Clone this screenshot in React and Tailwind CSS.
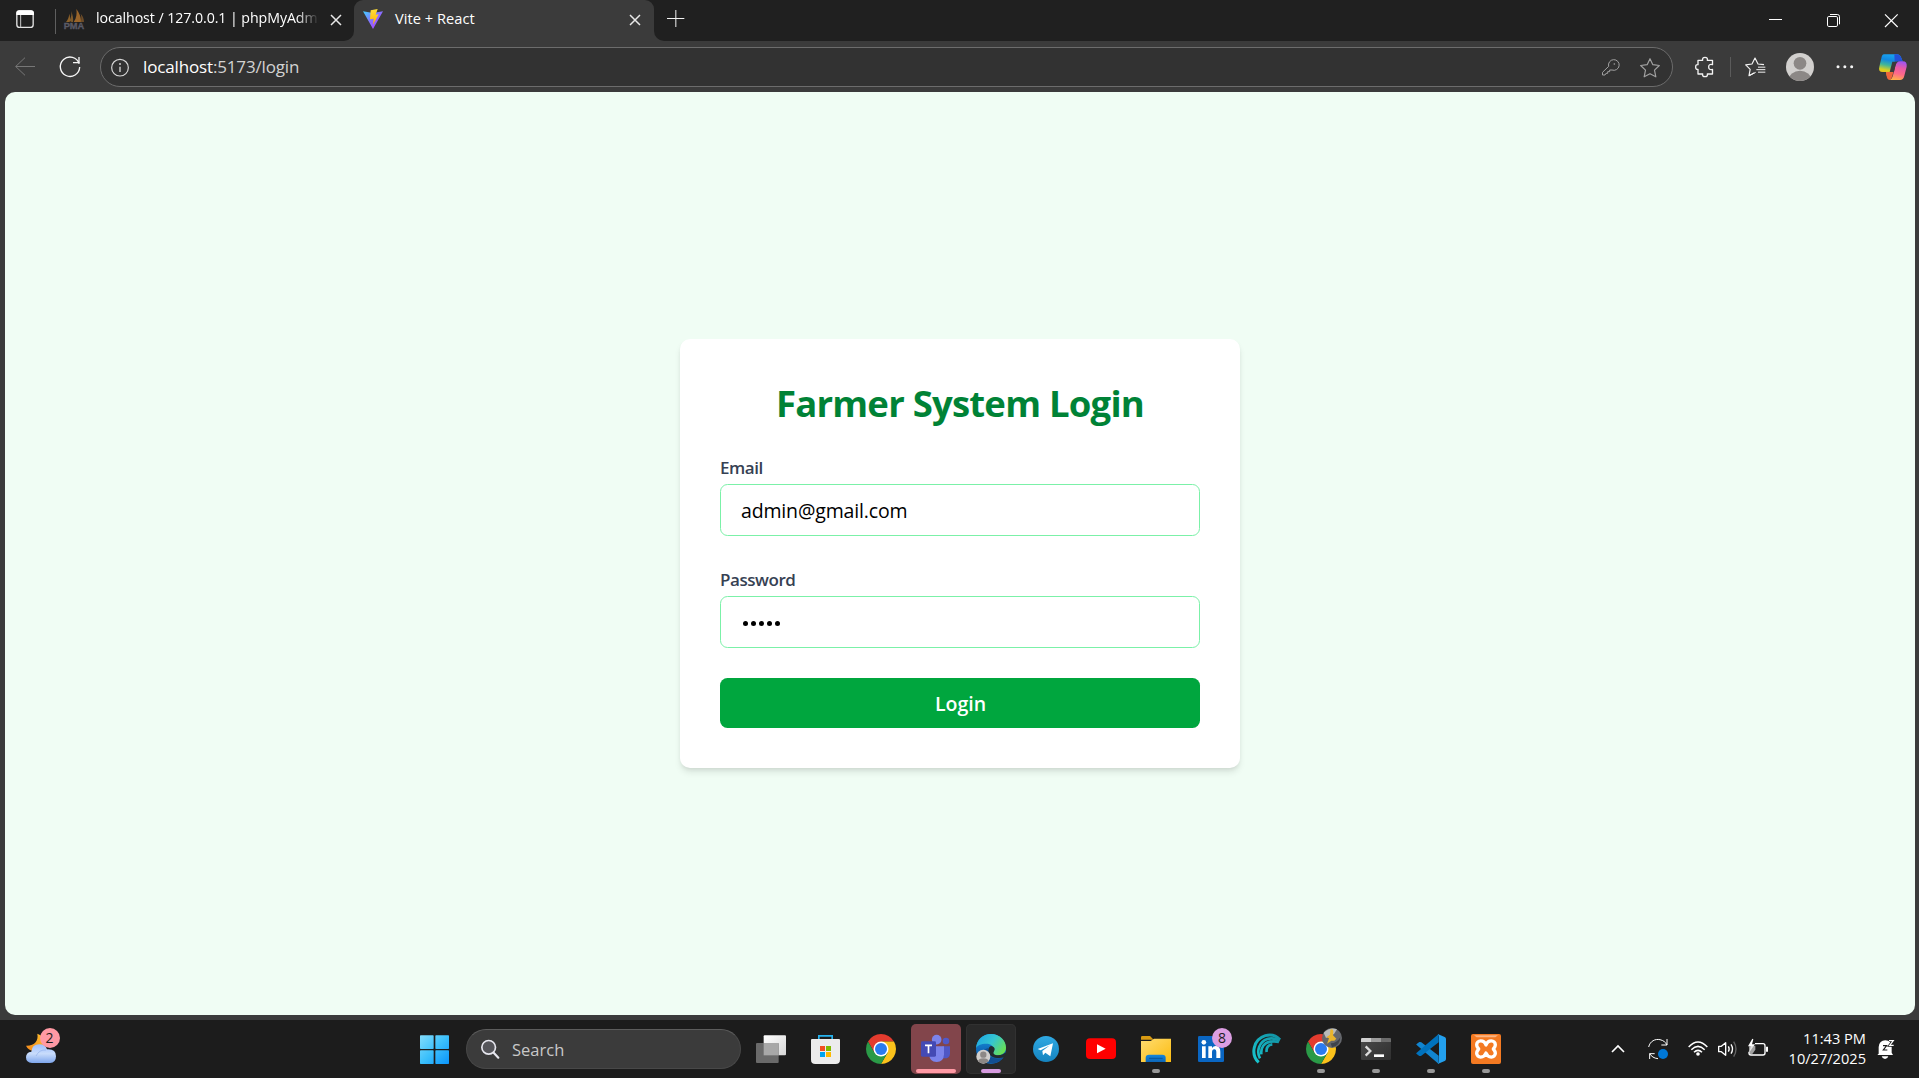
import React from "react";

/* Glyph drawn in a slot of the given size; drawings use three units per pixel. */
function Glyph({ x, y, w, h, children, className = "" }) {
  return (
    <svg width={w} height={h} viewBox={`${x} ${y} ${w * 3} ${h * 3}`} fill="none" className={`shrink-0 ${className}`}>
      {children}
    </svg>
  );
}

function TabClose() {
  return (
    <svg width="12" height="12" viewBox="0 0 12 12" fill="none" className="shrink-0">
      <path d="M1 1L11 11M11 1L1 11" stroke="#e8e8e8" strokeWidth="1.5" />
    </svg>
  );
}

function TitleBar() {
  return (
    <header className="flex h-[42px] shrink-0 bg-[#3b3b3b] text-white">
      <div className="flex h-[41px] w-[354px] items-center rounded-br-[10px] bg-[#202020]">
        <Glyph x={0} y={0} w={55} h={41}>
          <rect x="50.500" y="33" width="49" height="49" rx="8" stroke="#e4e4e4" strokeWidth="4" />
          <path d="M49 45V40Q49 31 58 31H93Q102 31 102 40V45Z" fill="#fff" />
          <path d="M62 45V82" stroke="#c9c9c9" strokeWidth="3" />
        </Glyph>
        <div className="mt-px h-[25px] w-px bg-[#5f5f5f]" />
        <Glyph x={186} y={0} w={24} h={41} className="ml-[6px]">
          <path d="M215 66L208 62C214 52 215 42 214 33C218 46 221 58 219 66Z" fill="#7d5a2c" />
          <path d="M198 66C204 60 207 50 208 41C211 52 211 60 209 66Z" fill="#8a602a" />
          <path d="M221 66C230 54 231 40 229 27C238 38 244 54 243 66Z" fill="#9a652a" />
          <path d="M242 66C245 58 244 48 242 41C249 48 252 58 252 66Z" fill="#6d4c28" />
          <text x="191" y="87" fontSize="27" fontWeight="700" fontFamily="Liberation Sans" textLength="62" lengthAdjust="spacingAndGlyphs" fill="#5a5a66" stroke="#5a5a66">PMA</text>
        </Glyph>
        <div className="ml-[10px] w-[223px] overflow-hidden whitespace-nowrap text-[14.2px] leading-[20px] tracking-[-0.07px] [mask-image:linear-gradient(to_right,black_90%,transparent)] -mt-[6px]">
          localhost / 127.0.0.1 | phpMyAdmin
        </div>
        <div className="ml-[11px] -mt-px"><TabClose /></div>
      </div>
      <div className="w-[300px] bg-[linear-gradient(#202020_50%,#3b3b3b_50%)]">
        <div className="flex h-[42px] items-center rounded-t-[9px] bg-[#3b3b3b]">
          <Glyph x={60} y={0} w={26} h={42} className="ml-[6px]">
            <path d="M69 34L99 39L129 34L99 87Z" fill="url(#viteBlue)" />
            <path d="M92 31L113 27L107 44L116 43L99 74L101 56L90 58Z" fill="url(#viteYellow)" />
          </Glyph>
          <div className="ml-[9px] -mt-[6px] flex-1 text-[14.6px] leading-[20px] tracking-[0.05px]">Vite + React</div>
          <div className="mr-[13px] -mt-[2px]"><TabClose /></div>
        </div>
      </div>
      <div className="flex h-[41px] flex-1 items-center justify-between rounded-bl-[10px] bg-[#202020]">
        <Glyph x={942} y={0} w={46} h={41}>
          <path d="M981 55.500H1033M1007.500 30V81" stroke="#f2f2f2" strokeWidth="3" />
        </Glyph>
        <div className="flex">
          <Glyph x={561} y={0} w={58} h={41}><path d="M627 58.500H666" stroke="#fff" strokeWidth="3" /></Glyph>
          <Glyph x={735} y={0} w={58} h={41}>
            <rect x="802.500" y="49.500" width="30" height="30" rx="4" stroke="#fff" strokeWidth="3" />
            <path d="M810 43.500H832Q838.500 43.500 838.500 50V73" stroke="#fff" strokeWidth="3" />
          </Glyph>
          <Glyph x={909} y={0} w={56} h={41}><path d="M975 43L1013 81M1013 43L975 81" stroke="#fff" strokeWidth="3.500" /></Glyph>
        </div>
      </div>
    </header>
  );
}

function Toolbar() {
  return (
    <div className="flex h-[50px] shrink-0 items-center bg-[#3b3b3b]">
      <Glyph x={0} y={126} w={50} h={50}>
        <path d="M105 199.500H47M75 173L47 199.500L75 226" stroke="#777" strokeWidth="3" />
      </Glyph>
      <Glyph x={150} y={126} w={50} h={50}>
        <path d="M237.500 191A29 29 0 1 0 239 201" stroke="#f5f5f5" strokeWidth="4" />
        <path d="M237 171V188H219" stroke="#f5f5f5" strokeWidth="4" />
      </Glyph>
      <div className="flex h-[40px] flex-1 items-center rounded-full border border-[#6c6c6c] bg-[#323232]">
        <Glyph x={303} y={142} w={42} h={38}>
          <circle cx="360" cy="201" r="25" stroke="#d8d8d8" strokeWidth="3.500" />
          <path d="M360 198V214" stroke="#d8d8d8" strokeWidth="4" />
          <circle cx="360" cy="190" r="2.800" fill="#d8d8d8" />
        </Glyph>
        <div className="flex-1 -mt-px text-[17px] leading-[24px] tracking-[-0.15px] text-[#d2d2d2]">
          <span className="text-white">localhost</span>:5173/login
        </div>
        <Glyph x={105} y={142} w={35} h={38}>
          <path d="M127.500 223V215L146 197A16 16 0 1 1 156 208L149 208V213H143V218H138L135 223Z" stroke="#a2a2a2" strokeWidth="3" strokeLinejoin="round" />
          <circle cx="163" cy="190" r="2.500" fill="#a2a2a2" />
        </Glyph>
        <Glyph x={210} y={142} w={42} h={38}>
          <path d="M270 174L278.500 192L298 194.500L283.500 208.500L287.500 228.500L270 219L252.500 228.500L256.500 208.500L242 194.500L261.500 192Z" stroke="#a2a2a2" strokeWidth="3.500" strokeLinejoin="round" />
        </Glyph>
      </div>
      <Glyph x={339} y={126} w={57} h={50}>
        <path d="M417 181H428Q426 172 435 172Q444 172 442 181H457.500V194Q446 191 446 201Q446 211 457.500 208V222H442Q444 230 435 230Q426 230 428 222H414V208Q407 209 407 201Q407 193 414 194V181Z" stroke="#f3f3f3" strokeWidth="4" strokeLinejoin="round" />
      </Glyph>
      <div className="h-[20px] w-px bg-[#5b5b5b]" />
      <Glyph x={510} y={126} w={50} h={50} className="-ml-px">
        <path d="M583 218L567 227L570.500 208L557 194.500L576 192L585 174L594 192L612 194" stroke="#f3f3f3" strokeWidth="3.500" strokeLinejoin="round" />
        <path d="M594 201.500H616M589 209H616M594 216.500H616" stroke="#f3f3f3" strokeWidth="3" />
        <path d="M570 226L587 217" stroke="#f3f3f3" strokeWidth="3" />
      </Glyph>
      <Glyph x={660} y={126} w={44} h={50}>
        <clipPath id="avatarClip"><circle cx="720" cy="201" r="42" /></clipPath>
        <circle cx="720" cy="201" r="42" fill="#d2d0ce" />
        <g clipPath="url(#avatarClip)" fill="#8c8886">
          <circle cx="720" cy="190" r="19" />
          <ellipse cx="720" cy="240" rx="34" ry="28" />
        </g>
      </Glyph>
      <Glyph x={792} y={126} w={42} h={50}>
        <g fill="#f5f5f5"><circle cx="834" cy="200.500" r="4.500" /><circle cx="854.500" cy="200.500" r="4.500" /><circle cx="875" cy="200.500" r="4.500" /></g>
      </Glyph>
      <Glyph x={918} y={126} w={53} h={50}>
        <path d="M972 163H1011Q1020 163 1024 174L1028 184H1012Q1002 184 999 194L991 239Q984 240 980 226L978 216H968Q954 216 958 200L964 175Q966 163 972 163Z" fill="url(#copilotLeft)" />
        <path d="M1003 163H1011Q1020 163 1024 174L1028 184H1012L1004 184Z" fill="#2450d8" />
        <path d="M1028 184Q1042 184 1040 200L1033 227Q1030 240 1020 240H988Q996 238 999 226L1006 198Q1010 184 1020 184Z" fill="url(#copilotRight)" />
        <path d="M978 216H1000L997 228Q994 240 986 239Q980 238 978 216Z" fill="#f0643c" />
        <path d="M997 185H1009L1002 216H989Z" fill="#3b3b3b" />
      </Glyph>
    </div>
  );
}

function Field({ label, children }) {
  return (
    <label className="mb-[30px] block">
      <span className="block h-[25px] pt-px text-[17px] font-semibold leading-[25px] tracking-[-0.45px] text-gray-700">{label}</span>
      <span className="mt-[5px] flex h-[52px] w-full items-center rounded-[7.5px] border border-green-300 px-5 pt-[2px] text-[19.5px] tracking-[-0.16px] text-black">
        {children}
      </span>
    </label>
  );
}

function LoginPage() {
  return (
    <main className="flex flex-1 bg-[#3b3b3b] pb-[5px] pl-[5px] pr-[4px]">
      <div className="flex flex-1 items-center justify-center rounded-[10px] bg-green-50">
        <form className="w-[560px] rounded-[10px] bg-white p-10 shadow-[0_5px_7.5px_-1.25px_rgb(0_0_0/0.1),0_2.5px_5px_-2.5px_rgb(0_0_0/0.1)]">
          <h1 className="mb-[28px] pt-[2px] text-center text-[36.5px] font-bold leading-[45px] tracking-[-0.78px] text-green-700">
            Farmer System Login
          </h1>
          <Field label="Email">admin@gmail.com</Field>
          <Field label="Password">
            <span className="flex gap-[3px] pl-[2px]">
              {[0, 1, 2, 3, 4].map((i) => <i key={i} className="size-[5px] rounded-full bg-black" />)}
            </span>
          </Field>
          <button type="button" className="block h-[50px] w-full rounded-[7.5px] bg-green-600 pt-[2px] pl-px text-[19.5px] font-semibold text-white">
            Login
          </button>
        </form>
      </div>
    </main>
  );
}

function ChromeMark({ cx, cy }) {
  return (
    <g transform={`translate(${cx} ${cy})`}>
      <path d="M-38.970 -22.500A45 45 0 0 1 38.970 -22.500L0 -22.500L-19.500 11.250Z" fill="#e33b2e" />
      <path d="M38.970 -22.500A45 45 0 0 1 0 45L19.500 11.250L0 -22.500Z" fill="#fcc21b" />
      <path d="M0 45A45 45 0 0 1 -38.970 -22.500L-19.500 11.250L19.500 11.250Z" fill="#2a9a47" />
      <circle r="22.500" fill="#fff" />
      <circle r="18" fill="#2b7bf0" />
    </g>
  );
}

function TaskbarApp({ x, indicator, tile = "", children, badge }) {
  return (
    <div className={`relative size-[50px] shrink-0 rounded-[5px] ${tile}`}>
      <Glyph x={x} y={57} w={50} h={50} className="block">
        {children}
        {indicator}
      </Glyph>
      {badge}
    </div>
  );
}

const dot = (cx) => <rect x={cx - 12} y="192" width="24" height="12" rx="6" fill="#989898" />;

function Badge({ className, children }) {
  return (
    <span className={`absolute flex size-5 items-center justify-center rounded-full text-[14px] leading-none text-[#1c1c1c] ${className}`}>
      {children}
    </span>
  );
}

function Taskbar() {
  return (
    <footer className="flex h-[58px] shrink-0 items-start bg-[#1c1c1c] pt-[4px] text-white">
      <div className="relative ml-[16px] size-[50px] shrink-0">
        <Glyph x={48} y={72} w={50} h={50} className="block">
          <path d="M112 101C116 122 104 138 78 137C84 150 96 154 108 151L134 142V112Z" fill="url(#moon)" />
          <path d="M96 189Q78 188 78 172Q78 157 94 155Q96 133 118 133Q136 133 141 148Q168 146 168 169Q168 188 150 189Z" fill="url(#cloud)" />
          <path d="M108 168Q118 148 138 150" stroke="#8cabe8" strokeWidth="3" opacity=".6" />
        </Glyph>
        <Badge className="left-[23.500px] top-[4px] bg-[#ff99a4]">2</Badge>
      </div>
      <div className="flex flex-1 items-start pl-[344px]">
        <Glyph x={30} y={57} w={50} h={50}>
          <g fill="url(#win)"><rect x="60" y="91" width="41" height="41" rx="2" /><rect x="106" y="91" width="41" height="41" rx="2" /><rect x="60" y="136" width="41" height="41" rx="2" /><rect x="106" y="136" width="41" height="41" rx="2" /></g>
        </Glyph>
        <div className="ml-[6px] mt-[5px] flex h-[40px] w-[275px] shrink-0 items-center rounded-full border border-[#484848] border-t-[#5c5c5c] bg-[#3b3b3b]">
          <Glyph x={201} y={75} w={45} h={38}>
            <circle cx="266" cy="127" r="20.500" stroke="#e6e6ee" strokeWidth="5" fill="#55555a" />
            <path d="M281 143L295 158" stroke="#e6e6ee" strokeWidth="6.500" strokeLinecap="round" />
          </Glyph>
          <span className="mt-[1px] text-[16.500px] leading-[24px] text-[#c8c8c8]">Search</span>
        </div>
        <div className="ml-[5px] flex gap-[5px]">
          <TaskbarApp x={18}>
            <rect x="71" y="91" width="67" height="60" rx="3" fill="url(#sheet)" />
            <rect x="48" y="114" width="68" height="60" rx="3" fill="#6a6a6a" />
            <rect x="71" y="114" width="45" height="37" fill="#a8a8a8" />
          </TaskbarApp>
          <TaskbarApp x={183}>
            <path d="M236.500 108V92.500H276.500V108" stroke="#26b3ee" strokeWidth="5" />
            <path d="M213 105Q213 102 216 102H297Q300 102 300 105V164Q300 177 287 177H226Q213 177 213 164Z" fill="#ececec" />
            <rect x="240" y="123" width="15" height="15" fill="#f25022" /><rect x="258" y="123" width="15" height="15" fill="#7fba00" />
            <rect x="240" y="141" width="15" height="15" fill="#00a4ef" /><rect x="258" y="141" width="15" height="15" fill="#ffb900" />
          </TaskbarApp>
          <TaskbarApp x={348}><ChromeMark cx={423} cy={132} /></TaskbarApp>
          <TaskbarApp x={513} tile="bg-[#82454b]" indicator={<rect x="528" y="192" width="120" height="12" rx="6" fill="#ff99a4" />}>
            <circle cx="618" cy="108" r="10" fill="#5059c9" />
            <path d="M607 124H630V146Q629 160 614 160H607Z" fill="#4f57c6" />
            <circle cx="590" cy="104" r="14.500" fill="#7b83eb" />
            <path d="M568 124H612V148Q611 171 590 171Q568 171 568 148Z" fill="#7b83eb" />
            <rect x="543" y="109" width="45" height="46" rx="4" fill="#444ab4" />
            <path d="M555 121H576M565.500 121V145" stroke="#fff" strokeWidth="5" />
          </TaskbarApp>
          <TaskbarApp x={678} tile="bg-[#292929] shadow-[inset_0_0_0_1px_#313131]" indicator={<rect x="723" y="192" width="60" height="12" rx="6" fill="#d79be0" />}>
            <circle cx="753" cy="132" r="45" fill="url(#edgeBlue)" />
            <path d="M708 130C710 103 729 87 753 87C780 87 798 107 798 128C798 144 784 152 770 151C758 150 756 144 762 138C764 124 752 116 739 116C723 116 710 122 708 130Z" fill="url(#edgeGreen)" />
            <path d="M744 129C738 152 758 166 790 158C775 177 745 181 731 163C722 151 728 133 744 129Z" fill="#124f93" />
            <path d="M753 123C763 125 767 131 762 139C757 147 765 151 774 151C783 151 792 147 796 142L800 150L794 157C770 164 742 155 745 134C746 128 749 124 753 123Z" fill="#232a2e" />
            <circle cx="730" cy="155" r="21" fill="#d0cecc" />
            <circle cx="730" cy="149" r="9.500" fill="#8c8886" />
            <path d="M714 169Q716 160 730 160Q744 160 746 169Q730 182 714 169Z" fill="#8c8886" />
          </TaskbarApp>
          <TaskbarApp x={63}>
            <circle cx="138" cy="132" r="39" fill="url(#tele)" />
            <path d="M113 132L159 115L151 154L136 143L129 151L127 138L150 121L122 136Z" fill="#fff" />
          </TaskbarApp>
          <TaskbarApp x={228}>
            <rect x="258" y="100" width="90" height="62" rx="12" fill="#f00" />
            <path d="M291 118L317 131L291 145Z" fill="#fff" />
          </TaskbarApp>
          <TaskbarApp x={393} indicator={dot(468)}>
            <path d="M423 97Q423 93 427 93H450L461 104H423Z" fill="#d99b12" />
            <path d="M423 108H452L462 101H513V171H423Z" fill="url(#folder)" />
            <path d="M437 171V158Q437 149 447 149H487Q497 149 497 158V171Z" fill="url(#folderTab)" />
            <path d="M447 160H488" stroke="#0a559c" strokeWidth="3" />
          </TaskbarApp>
          <TaskbarApp x={558} badge={<Badge className="left-[26px] top-[4px] bg-[#dc9ee2]">8</Badge>}>
            <rect x="594" y="93" width="78" height="78" rx="4" fill="#0a66c2" />
            <circle cx="611.500" cy="112" r="7" fill="#fff" />
            <path d="M606 124H617V159H606ZM625 124H636V129Q640 123 647 123Q661 123 661 140V159H649V142Q649 133 643 133Q636 133 636 142V159H625Z" fill="#fff" />
          </TaskbarApp>
          <TaskbarApp x={-57}>
            <g stroke="url(#wave)">
              <path d="M-4 172C-28 150 -22 104 16 92C34 87 48 91 60 104" strokeWidth="9" />
              <path d="M0 160C-12 138 -2 110 22 102C36 98 48 101 59 107" strokeWidth="8" />
              <path d="M4 148C2 128 12 114 30 110C42 108 50 109 57 111" strokeWidth="8" />
              <path d="M20 141C18 128 25 119 37 118" strokeWidth="8" />
            </g>
          </TaskbarApp>
          <TaskbarApp x={108} indicator={dot(183)} badge={
            <svg width="20" height="20" viewBox="0 0 60 60" className="absolute left-[25.500px] top-[4px]">
              <circle cx="30" cy="30" r="30" fill="#65676c" />
              <path d="M5 14Q25 -4 45 4L36 18L12 30Z" fill="#b9bbb9" />
              <path d="M25 5Q33 1 34 10L33 22L43 32L37 38L28 38L15 47L21 31L13 28L24 20Z" fill="#e9b52c" />
              <path d="M26 46Q44 46 55 28Q54 54 30 58Z" fill="#3f444c" />
            </svg>
          }>
            <ChromeMark cx={183} cy={132} />
          </TaskbarApp>
          <TaskbarApp x={273} indicator={dot(348)}>
            <rect x="303" y="99" width="90" height="66" rx="4" fill="url(#term)" />
            <path d="M303 111V103Q303 99 307 99H333V111Z" fill="#d0d0d0" />
            <path d="M333 99H363V111H333Z" fill="#9c9c9c" /><path d="M363 99H389Q393 99 393 103V111H363Z" fill="#6b6b6b" />
            <path d="M317 124L331 138L317 152" stroke="#dcdcdc" strokeWidth="7" />
            <path d="M342 152H372" stroke="#fff" strokeWidth="8" />
          </TaskbarApp>
          <TaskbarApp x={438} indicator={dot(513)}>
            <path d="M470 117L478 111Q481 110 484 112L536 152V177L470 120Q467 118 470 117Z" fill="#1185d0" />
            <path d="M470 147L478 153Q481 154 484 152L536 112V87L470 143Q467 145 470 147Z" fill="#0072bd" />
            <path d="M533 177Q537 174 537 169V95Q537 90 533 87L554 96Q558 98 558 102V162Q558 166 554 168Z" fill="#23a0ee" />
          </TaskbarApp>
          <TaskbarApp x={603} indicator={dot(678)}>
            <rect x="633" y="87" width="90" height="90" rx="6" fill="#f47a22" />
            <path d="M642 91H714L706 97H650Z" fill="#fbb482" />
            <path d="M678 120C672 103 650 105 650 119C650 127 655 129 656 132C655 135 650 137 650 145C650 159 672 161 678 144C684 161 706 159 706 145C706 137 701 135 700 132C701 129 706 127 706 119C706 105 684 103 678 120Z" stroke="#fff" strokeWidth="10" strokeLinejoin="round" />
          </TaskbarApp>
        </div>
      </div>
      <div className="flex shrink-0 items-start">
        <Glyph x={45} y={57} w={32} h={50}><path d="M66 141L84 123L102 141" stroke="#fff" strokeWidth="5" /></Glyph>
        <Glyph x={141} y={57} w={45} h={50}>
          <path d="M176 126C180 108 196 101 210 104C220 106 227 112 231 120M231 102V120H214" stroke="#fff" strokeWidth="3" />
          <path d="M179 162V146H194M179 146C184 154 192 160 204 161" stroke="#fff" strokeWidth="3" />
          <circle cx="219" cy="147" r="15" fill="#0078d7" />
        </Glyph>
        <Glyph x={276} y={57} w={30} h={50}>
          <g stroke="#fff" strokeWidth="4.500"><path d="M296 126Q324 96 352 126" /><path d="M304 134Q324 114 344 134" /><path d="M312 142Q324 130 336 142" /></g>
          <circle cx="324" cy="147" r="5.500" fill="#fff" />
        </Glyph>
        <Glyph x={366} y={57} w={30} h={50}>
          <path d="M386 124H394L407 113V151L394 140H386Z" stroke="#fff" strokeWidth="4" strokeLinejoin="round" />
          <path d="M415 124Q420 132 415 140M423 118Q432 132 423 146" stroke="#fff" strokeWidth="4" />
          <path d="M431 110Q445 132 431 155" stroke="#646464" strokeWidth="4" />
        </Glyph>
        <Glyph x={456} y={57} w={30} h={50}>
          <path d="M495 116H519Q525 116 525 122V144Q525 150 519 150H483Q477 150 477 144V140" stroke="#fff" strokeWidth="4" />
          <path d="M528 125H534V140H528Z" fill="#fff" />
          <path d="M487 101L474 124H482L478 142L495 118H486L490 103Z" fill="#fff" />
          <path d="M477 124V147H487L496 134V122" fill="#d8d8d8" opacity=".7" />
        </Glyph>
        <div className="mt-[4px] w-[104px] pr-[10px] text-right text-[14.600px] leading-[20px]">
          <div>11:43 PM</div>
          <div>10/27/2025</div>
        </div>
        <Glyph x={858} y={57} w={43} h={50}>
          <path d="M866 146V126Q868 106 886 106Q905 106 905 126V143L909 150H862Z" fill="#fff" />
          <path d="M875 154H895Q893 162 885 162Q877 162 875 154Z" fill="#fff" />
          <path d="M879 122H890L880 135H892" stroke="#1c1c1c" strokeWidth="3.500" />
          <path d="M897 106H910L899 121H911" stroke="#1c1c1c" strokeWidth="8" />
          <path d="M897 107H910L899 121H911" stroke="#fff" strokeWidth="3.500" />
        </Glyph>
      </div>
    </footer>
  );
}

function Lin({ id, stops, d = [0, 0, 1, 1] }) {
  return (
    <linearGradient id={id} x1={d[0]} y1={d[1]} x2={d[2]} y2={d[3]}>
      {stops.map((c, i) => <stop key={i} offset={i / (stops.length - 1)} stopColor={c} />)}
    </linearGradient>
  );
}

function Gradients() {
  return (
    <svg className="absolute size-0" aria-hidden="true">
      <defs>
        <Lin id="viteBlue" stops={["#41d1ff", "#8a6cff", "#bd34fe"]} />
        <Lin id="viteYellow" stops={["#ffdf3a", "#ffb000"]} d={[0, 0, 0, 1]} />
        <Lin id="copilotLeft" stops={["#18a0ee", "#1288e0", "#3fb59a", "#d8d020", "#f8b020"]} d={[0.3, 0, 0.15, 0.8]} />
        <Lin id="copilotRight" stops={["#a055f0", "#e85aa8", "#ff6a88", "#ffb04a"]} d={[0.6, 0, 0.4, 1]} />
        <Lin id="moon" stops={["#ffc02e", "#f58a1c"]} d={[1, 0, 0, 1]} />
        <Lin id="cloud" stops={["#9fc0ff", "#c9dcfb", "#7ea6ec"]} d={[0, 0, 0, 1]} />
        <linearGradient id="win" gradientUnits="userSpaceOnUse" x1="60" y1="91" x2="147" y2="177">
          <stop offset="0" stopColor="#83dcfb" /><stop offset=".5" stopColor="#3cc0fb" /><stop offset="1" stopColor="#0a94fb" />
        </linearGradient>
        <Lin id="sheet" stops={["#ffffff", "#d6d6d6"]} />
        <Lin id="edgeBlue" stops={["#1b9be0", "#0f6cbd", "#1463ad"]} d={[0, 0, 0, 1]} />
        <Lin id="edgeGreen" stops={["#1ea7e4", "#35c6d0", "#6be04e"]} d={[0, 0.2, 1, 0.7]} />
        <Lin id="tele" stops={["#2fa9e3", "#1583bf"]} d={[0, 0, 0, 1]} />
        <Lin id="folder" stops={["#ffdc70", "#fcbc10"]} />
        <Lin id="folderTab" stops={["#1687dc", "#0c66b8"]} d={[0, 0, 0, 1]} />
        <linearGradient id="wave" gradientUnits="userSpaceOnUse" x1="-20" y1="170" x2="60" y2="95">
          <stop offset="0" stopColor="#18c6cf" /><stop offset="1" stopColor="#1292a4" />
        </linearGradient>
        <Lin id="term" stops={["#4a4a4a", "#303030"]} />
      </defs>
    </svg>
  );
}

export default function App() {
  return (
    <div className="flex h-screen w-screen flex-col overflow-hidden bg-[#3b3b3b] font-['Open_Sans',sans-serif]">
      <Gradients />
      <TitleBar />
      <Toolbar />
      <LoginPage />
      <Taskbar />
    </div>
  );
}
